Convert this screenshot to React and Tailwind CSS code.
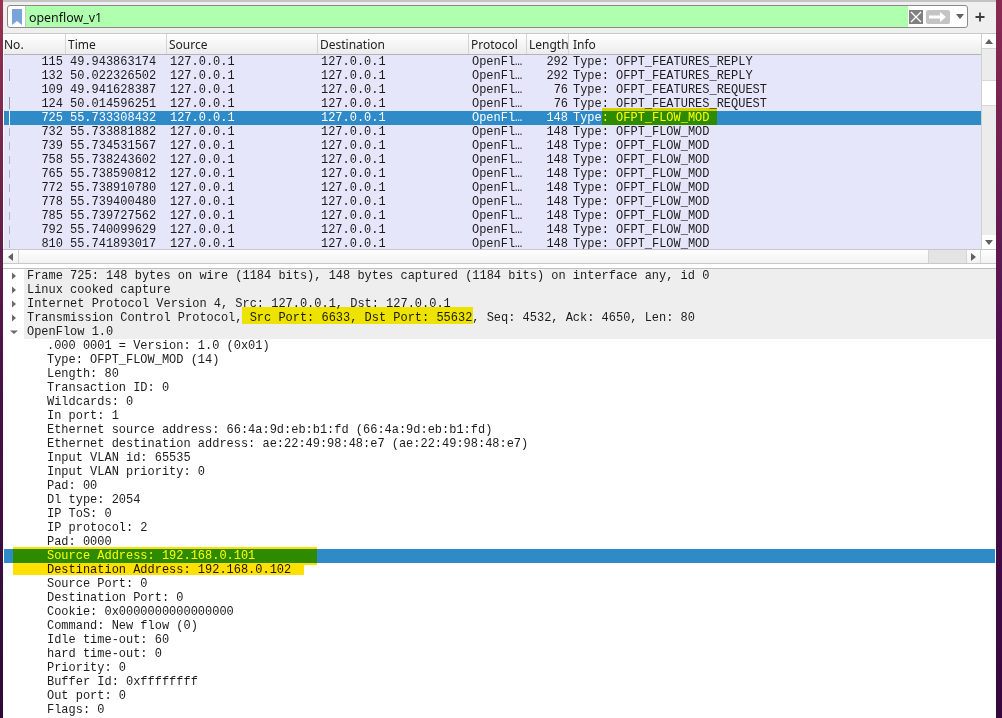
const rows = [
  ["115", "49.943863174", "292", "Type: OFPT_FEATURES_REPLY", 0],
  ["132", "50.022326502", "292", "Type: OFPT_FEATURES_REPLY", 1],
  ["109", "49.941628387", "76", "Type: OFPT_FEATURES_REQUEST", 0],
  ["124", "50.014596251", "76", "Type: OFPT_FEATURES_REQUEST", 1],
  ["725", "55.733308432", "148", "Type: OFPT_FLOW_MOD", 2],
  ["732", "55.733881882", "148", "Type: OFPT_FLOW_MOD", 3],
  ["739", "55.734531567", "148", "Type: OFPT_FLOW_MOD", 3],
  ["758", "55.738243602", "148", "Type: OFPT_FLOW_MOD", 3],
  ["765", "55.738590812", "148", "Type: OFPT_FLOW_MOD", 3],
  ["772", "55.738910780", "148", "Type: OFPT_FLOW_MOD", 3],
  ["778", "55.739400480", "148", "Type: OFPT_FLOW_MOD", 3],
  ["785", "55.739727562", "148", "Type: OFPT_FLOW_MOD", 3],
  ["792", "55.740099629", "148", "Type: OFPT_FLOW_MOD", 3],
  ["810", "55.741893017", "148", "Type: OFPT_FLOW_MOD", 3],
];

const top = [
  "Frame 725: 148 bytes on wire (1184 bits), 148 bytes captured (1184 bits) on interface any, id 0",
  "Linux cooked capture",
  "Internet Protocol Version 4, Src: 127.0.0.1, Dst: 127.0.0.1",
  "Transmission Control Protocol, Src Port: 6633, Dst Port: 55632, Seq: 4532, Ack: 4650, Len: 80",
  "OpenFlow 1.0",
];

const fields = [
  ".000 0001 = Version: 1.0 (0x01)",
  "Type: OFPT_FLOW_MOD (14)",
  "Length: 80",
  "Transaction ID: 0",
  "Wildcards: 0",
  "In port: 1",
  "Ethernet source address: 66:4a:9d:eb:b1:fd (66:4a:9d:eb:b1:fd)",
  "Ethernet destination address: ae:22:49:98:48:e7 (ae:22:49:98:48:e7)",
  "Input VLAN id: 65535",
  "Input VLAN priority: 0",
  "Pad: 00",
  "Dl type: 2054",
  "IP ToS: 0",
  "IP protocol: 2",
  "Pad: 0000",
  "Source Address: 192.168.0.101",
  "Destination Address: 192.168.0.102",
  "Source Port: 0",
  "Destination Port: 0",
  "Cookie: 0x0000000000000000",
  "Command: New flow (0)",
  "Idle time-out: 60",
  "hard time-out: 0",
  "Priority: 0",
  "Buffer Id: 0xffffffff",
  "Out port: 0",
  "Flags: 0",
];

const headers = [
  ["No.", "w-[62px] pl-0"],
  ["Time", "w-[101px] pl-[2px]"],
  ["Source", "w-[151px] pl-[2px]"],
  ["Destination", "w-[151px] pl-[2px]"],
  ["Protocol", "w-[58px] pl-[2px]"],
  ["Length", "w-[42px] pl-[2px]"],
  ["Info", "flex-1 pl-[4px]"],
];

function Arrow({ dir }) {
  return (
    <svg width="8" height="8" viewBox="0 0 8 8" className="shrink-0">
      {dir === "right" ? (
        <path d="M2 0.5 L6 4 L2 7.5 Z" fill="#6a6a6a" />
      ) : (
        <path d="M0 2.5 L8 2.5 L4 6 Z" fill="#6a6a6a" />
      )}
    </svg>
  );
}

function Mark({ kind }) {
  if (!kind) return null;
  if (kind === 2) return <div className="absolute left-[5px] top-0 bottom-0 w-px bg-white" />;
  if (kind === 1) return <div className="absolute left-[5px] top-0 bottom-[2px] w-px bg-[#9a9aa8]" />;
  return <div className="absolute left-[5px] top-[3px] bottom-[3px] w-px bg-[#b4b4c4]" />;
}

export default function App() {
  return (
    <div className="relative w-[1002px] h-[718px] overflow-hidden flex font-['Liberation_Mono',monospace] text-[11.97px] leading-[14px] text-[#1c1c1c]">
      <div className="w-[3px] shrink-0 bg-gradient-to-b from-[#9a3150] via-[#4a1248] to-[#2e0a3a]" />
      <div className="w-[993px] shrink-0 flex flex-col bg-white">
        {/* filter toolbar */}
        <div className="h-[33px] shrink-0 bg-[#efefef] border-t-2 border-[#c4c4c4] flex items-center pl-1 pr-2 pb-[2px] font-['Noto_Sans',sans-serif]">
          <div className="w-[961px] h-[23px] flex items-stretch border border-[#8a8a8a] rounded-[3px] bg-white overflow-hidden">
            <div className="w-[17px] shrink-0 flex items-center justify-center">
              <svg width="10" height="16" viewBox="0 0 10 16">
                <path d="M0 0 H10 V16 L5 12 L0 16 Z" fill="#78a4d8" />
              </svg>
            </div>
            <div className="w-[883px] shrink-0 bg-[#afffaf] border-l border-[#c8c8c8] pl-[3px] text-[12.4px] leading-[23px] text-[#101010]">
              openflow_v1
            </div>
            <div className="flex items-center flex-1 pl-px">
              <div className="w-[14px] h-[14px] bg-[#808080] flex items-center justify-center">
                <svg width="12" height="12" viewBox="0 0 12 12">
                  <path d="M1 1 L11 11 M11 1 L1 11" stroke="#fff" strokeWidth="1.3" />
                </svg>
              </div>
              <div className="ml-[3px] w-[24px] h-[14px] bg-[#c4c4c4] rounded-[2px] flex items-center justify-center">
                <svg width="18" height="10" viewBox="0 0 18 10">
                  <path d="M0 3.5 H11 V0 L17 5 L11 10 V6.5 H0 Z" fill="#fff" />
                </svg>
              </div>
              <svg width="8" height="5" viewBox="0 0 8 5" className="ml-[6px]">
                <path d="M0 0 H8 L4 5 Z" fill="#606060" />
              </svg>
            </div>
          </div>
          <svg width="10" height="10" viewBox="0 0 10 10" className="ml-[7px]">
            <path d="M5 0.5 V9.5 M0.5 5 H9.5" stroke="#3c3c3c" strokeWidth="1.8" />
          </svg>
        </div>

        {/* packet list */}
        <div className="h-[231px] shrink-0 flex flex-col border-t border-[#c8c8c8]">
          <div className="flex flex-1 min-h-0">
            <div className="w-[977px] shrink-0 ml-px flex flex-col">
              <div className="h-[21px] shrink-0 flex bg-gradient-to-b from-white to-[#ececec] border-b border-[#b4b4b4] font-['Noto_Sans',sans-serif] text-[12px] leading-[21px] text-[#222]">
                {headers.map(([h, w]) => (
                  <div key={h} className={`${w} shrink-0 border-r border-[#d4d4d4] last:border-r-0`}>
                    {h}
                  </div>
                ))}
              </div>
              <div className="flex-1 min-h-0 overflow-hidden bg-[#e6e6fb]">
                {rows.map(([no, time, len, info, mark]) => {
                  const selected = mark === 2;
                  return (
                    <div
                      key={no}
                      className={`h-[14px] flex relative whitespace-pre ${selected ? "bg-[#2e8bc8] text-white" : ""}`}
                    >
                      <Mark kind={mark} />
                      <div className="w-[59px] text-right shrink-0">{no}</div>
                      <div className="w-[104px] pl-[7px] shrink-0">{time}</div>
                      <div className="w-[151px] shrink-0 pl-[3px]">127.0.0.1</div>
                      <div className="w-[151px] shrink-0 pl-[3px]">127.0.0.1</div>
                      <div className="w-[58px] shrink-0 pl-[3px]">OpenFl…</div>
                      <div className="w-[41px] shrink-0 text-right">{len}</div>
                      <div className="flex-1 pl-[5px]">{info}</div>
                    </div>
                  );
                })}
              </div>
            </div>
            {/* vertical scrollbar */}
            <div className="w-[15px] shrink-0 flex flex-col bg-[#ececec] border-l border-[#d0d0d0]">
              <div className="h-[15px] flex items-center justify-center bg-white border-b border-[#d4d4d4]">
                <svg width="8" height="5" viewBox="0 0 8 5">
                  <path d="M0 5 H8 L4 0 Z" fill="#606060" />
                </svg>
              </div>
              <div className="h-[31px]" />
              <div className="h-[26px] bg-white border-y border-[#d8d8d8]" />
              <div className="flex-1" />
              <div className="h-[14px] flex items-center justify-center bg-white">
                <svg width="8" height="5" viewBox="0 0 8 5">
                  <path d="M0 0 H8 L4 5 Z" fill="#606060" />
                </svg>
              </div>
            </div>
          </div>
          {/* horizontal scrollbar */}
          <div className="h-[15px] shrink-0 flex border-y border-[#c8c8c8] bg-gradient-to-b from-white to-[#f2f2f2]">
            <div className="w-[16px] shrink-0 flex items-center justify-center border-r border-[#d4d4d4]">
              <svg width="5" height="8" viewBox="0 0 5 8">
                <path d="M5 0 V8 L0 4 Z" fill="#606060" />
              </svg>
            </div>
            <div className="w-[909px] shrink-0" />
            <div className="w-[39px] shrink-0 bg-[#e4e4e4] border-x border-[#d4d4d4]" />
            <div className="w-[14px] shrink-0 flex items-center justify-center border-r border-[#d4d4d4]">
              <svg width="5" height="8" viewBox="0 0 5 8">
                <path d="M0 0 V8 L5 4 Z" fill="#606060" />
              </svg>
            </div>
          </div>
        </div>

        {/* splitter */}
        <div className="h-[5px] shrink-0 bg-white border-b border-[#c0c0c0]" />

        {/* packet details */}
        <div className="flex-1 min-h-0 overflow-hidden relative whitespace-pre">
          {top.map((t, i) => (
            <div key={t} className="h-[14px] flex items-center">
              <div className="w-[21px] shrink-0 flex justify-end pr-[6px]">
                <Arrow dir={i === 4 ? "down" : "right"} />
              </div>
              <div className="flex-1 bg-[#eeeeee] pl-[3px]">{t}</div>
            </div>
          ))}
          {fields.map((f) => {
            const sel = f.startsWith("Source Address");
            return (
              <div key={f} className={`h-[14px] ${sel ? "mx-px pl-[43px] bg-[#2e8bc8] text-white" : "pl-[44px]"}`}>
                {f}
              </div>
            );
          })}
          {/* highlighter marks drawn over the capture */}
          <div className="absolute left-[239px] top-[38px] w-[231px] h-[17px] bg-[#fff400] mix-blend-multiply" />
          <div className="absolute left-[10px] top-[278px] w-[304px] h-[2px] bg-[#ffe000] mix-blend-multiply" />
          <div className="absolute left-[10px] top-[280px] w-[304px] h-[14px] bg-[#ffff00] mix-blend-multiply" />
          <div className="absolute left-[10px] top-[294px] w-[304px] h-[2px] bg-[#ffe000] mix-blend-multiply" />
          <div className="absolute left-[10px] top-[296px] w-[291px] h-[10px] bg-[#ffe000] mix-blend-multiply" />
        </div>
      </div>
      <div className="w-[6px] shrink-0 bg-gradient-to-b from-[#8a2a50] via-[#4d0f50] to-[#35083c]" />
      <div className="absolute left-[602px] top-[108px] w-[115px] h-[3px] bg-[#f0e800] mix-blend-multiply" />
      <div className="absolute left-[602px] top-[111px] w-[115px] h-[14px] bg-[#ffff00] mix-blend-multiply" />
    </div>
  );
}
